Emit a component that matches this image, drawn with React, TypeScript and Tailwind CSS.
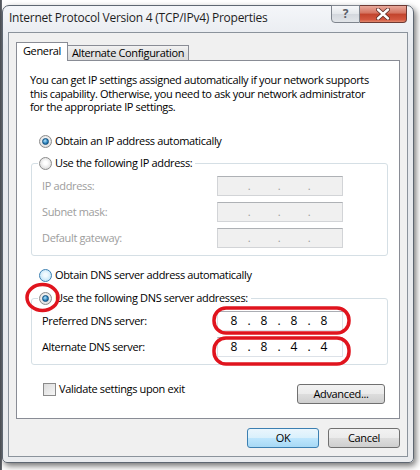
import React from "react";

const Radio: React.FC<{ checked?: boolean; hover?: boolean }> = ({ checked, hover }) => (
  <span
    className={
      hover
        ? "flex h-[13px] w-[13px] shrink-0 items-center justify-center rounded-full border border-[#3c7fb1] bg-[radial-gradient(circle_at_50%_45%,#f2fafe_20%,#b4dff7_90%)]"
        : "flex h-[13px] w-[13px] shrink-0 items-center justify-center rounded-full border border-[#8b8b8b] bg-[radial-gradient(circle_at_50%_45%,#ffffff_20%,#d4d4d4_90%)]"
    }
  >
    {checked && (
      <span className="h-[7px] w-[7px] rounded-full border border-[#0f4e7d] bg-[radial-gradient(circle_at_40%_35%,#b6e4fb,#2f86c0_55%,#114f80)]" />
    )}
  </span>
);

const IpField: React.FC<{ parts?: string[]; disabled?: boolean }> = ({ parts, disabled }) => {
  const vals = parts ?? ["", "", "", ""];
  return (
    <div
      className={
        disabled
          ? "flex h-[20px] w-[126px] items-center border border-[#d2d4d7] border-t-[#aeb1b5] bg-[#f0f0f0] pl-[4px] text-[#9a9a9a]"
          : "flex h-[20px] w-[126px] items-center border border-[#dde2e8] border-t-[#abadb3] bg-white pl-[4px] text-[12px] tracking-normal text-black"
      }
    >
      {vals.map((v, i) => (
        <React.Fragment key={i}>
          <span className="w-[24px] text-center">{v}</span>
          {i < 3 && <span className="w-[6px] text-center">.</span>}
        </React.Fragment>
      ))}
    </div>
  );
};

const Button: React.FC<{ label: string; primary?: boolean; w: string }> = ({ label, primary, w }) => (
  <div
    className={
      primary
        ? `flex h-[20px] ${w} items-center justify-center rounded-[3px] border border-[#3c7fb1] bg-[linear-gradient(#eaf6fd_0%,#d9f0fc_50%,#bee6fd_51%,#a7d9f5_100%)] text-black`
        : `flex h-[20px] ${w} items-center justify-center rounded-[3px] border border-[#707070] bg-[linear-gradient(#f2f2f2_0%,#ebebeb_50%,#dddddd_51%,#cfcfcf_100%)] text-black`
    }
  >
    {label}
  </div>
);

export default function App() {
  return (
    <div className="relative h-[470px] w-[420px] overflow-hidden bg-[linear-gradient(to_right,#4b4f55_0px,#6d7178_2px,#ffffff_2px)] pl-[2px] pt-[5px] font-['Open_Sans',sans-serif] text-[11px] tracking-[-0.35px] text-black">
      {/* window */}
      <div className="h-[458px] w-[412px] rounded-t-[7px] rounded-b-[5px] border border-[#5e6772] bg-[linear-gradient(#f4f6f9,#e6e9ee_40px,#e9ebee)] shadow-[2px_3px_6px_rgba(0,0,0,0.55)]">
        <div className="flex h-[26px] items-start justify-between">
          <span className="pl-[6px] pt-[3px] text-[12px] tracking-[-0.25px] text-[#1e1e1e]">
            Internet Protocol Version 4 (TCP/IPv4) Properties
          </span>
          <div className="mr-[6px] -mt-px flex h-[18px]">
            <div className="flex h-[18px] w-[29px] items-center justify-center rounded-bl-[4px] border border-[#7f858e] bg-[linear-gradient(#f7f8fa,#e3e6ea_50%,#d3d7dd_51%,#e2e5e9)] text-[12px] font-bold text-[#5b6068]">
              ?
            </div>
            <div className="flex h-[18px] w-[47px] items-center justify-center rounded-br-[4px] border border-l-0 border-[#6d3a34] bg-[linear-gradient(#e9a99c,#d4725f_45%,#c1432c_50%,#d3573f_85%,#e18a70)]">
              <svg width="14" height="12" viewBox="0 0 14 12">
                <path d="M2 1.5 L12 10.5 M12 1.5 L2 10.5" stroke="#5a2a24" strokeWidth="4" strokeLinecap="round" />
                <path d="M2 1.5 L12 10.5 M12 1.5 L2 10.5" stroke="#ffffff" strokeWidth="2.4" strokeLinecap="round" />
              </svg>
            </div>
          </div>
        </div>

        {/* client */}
        <div className="ml-[5px] h-[425px] w-[400px] border border-[#8b939c] bg-[#f0f0f0]">
          <div className="ml-[7px] mt-[9px] w-[384px]">
            {/* tabs */}
            <div className="flex h-[18px] items-end">
              <div className="relative z-10 -mb-px flex h-[19px] w-[52px] items-center justify-center border border-b-0 border-[#898c95] bg-white pb-[1px]">
                General
              </div>
              <div className="flex h-[15px] w-[121px] items-center justify-center whitespace-nowrap border border-b-0 border-l-0 border-[#898c95] bg-[linear-gradient(#f2f2f2,#e3e3e3_50%,#dbdbdb)]">
                Alternate Configuration
              </div>
            </div>

            {/* panel */}
            <div className="h-[359px] border border-[#898c95] bg-white">
              <p className="ml-[13px] mt-[12px] h-[41px] w-[366px] whitespace-nowrap leading-[13.5px]">
                You can get IP settings assigned automatically if your network supports
                <br />
                this capability. Otherwise, you need to ask your network administrator
                <br />
                for the appropriate IP settings.
              </p>

              <div className="ml-[22px] mt-[19px] flex h-[16px] items-center gap-[3px]">
                <Radio checked />
                <span>Obtain an IP address automatically</span>
              </div>

              <div className="ml-[14px] mt-[14px] h-[93px] w-[357px] rounded-[3px] border border-[#d5dfe5]">
                <div className="-mt-[9px] ml-[6px] flex h-[16px] w-fit items-center gap-[3px] bg-white pr-[3px] pl-[1px]">
                  <Radio />
                  <span>Use the following IP address:</span>
                </div>
                <div className="mt-[5px] flex flex-col gap-[6px] text-[#9d9d9d]">
                  {["IP address:", "Subnet mask:", "Default gateway:"].map((l) => (
                    <div key={l} className="flex h-[20px] items-center">
                      <span className="w-[185px] pl-[10px]">{l}</span>
                      <IpField disabled />
                    </div>
                  ))}
                </div>
              </div>

              <div className="ml-[22px] mt-[11px] flex h-[16px] items-center gap-[3px]">
                <Radio hover />
                <span>Obtain DNS server address automatically</span>
              </div>

              <div className="ml-[14px] mt-[15px] h-[67px] w-[357px] rounded-[3px] border border-[#d5dfe5]">
                <div className="-mt-[9px] ml-[6px] flex h-[16px] w-fit items-center gap-[3px] bg-white pr-[3px] pl-[1px]">
                  <Radio checked />
                  <span>Use the following DNS server addresses:</span>
                </div>
                <div className="mt-[5px] flex flex-col gap-[6px]">
                  <div className="flex h-[20px] items-center">
                    <span className="w-[185px] pl-[10px]">Preferred DNS server:</span>
                    <IpField parts={["8", "8", "8", "8"]} />
                  </div>
                  <div className="flex h-[20px] items-center">
                    <span className="w-[185px] pl-[10px]">Alternate DNS server:</span>
                    <IpField parts={["8", "8", "4", "4"]} />
                  </div>
                </div>
              </div>

              <div className="mt-[19px] flex h-[20px] items-start justify-between pr-[14px]">
                <div className="ml-[26px] -mt-[3px] flex h-[16px] items-center gap-[3px]">
                  <span className="h-[13px] w-[13px] border border-[#8b8b8b] bg-[linear-gradient(135deg,#dcdcdc,#f6f6f6)]" />
                  <span>Validate settings upon exit</span>
                </div>
                <Button label="Advanced..." w="w-[88px]" />
              </div>
            </div>

            {/* dialog buttons */}
            <div className="mt-[9px] flex justify-end gap-[9px]">
              <Button label="OK" primary w="w-[72px]" />
              <Button label="Cancel" w="w-[72px]" />
            </div>
          </div>
        </div>
      </div>

      {/* hand-drawn red annotation */}
      <svg className="pointer-events-none absolute left-0 top-0" width="420" height="470">
        <ellipse cx="42.5" cy="297.5" rx="15.5" ry="13" fill="none" stroke="#e0141e" strokeWidth="3.5" />
        <rect x="214" y="308" width="135" height="25" rx="12" fill="none" stroke="#e0141e" strokeWidth="3.5" />
        <rect x="214" y="338" width="135" height="26" rx="12" fill="none" stroke="#e0141e" strokeWidth="3.5" />
      </svg>
    </div>
  );
}
